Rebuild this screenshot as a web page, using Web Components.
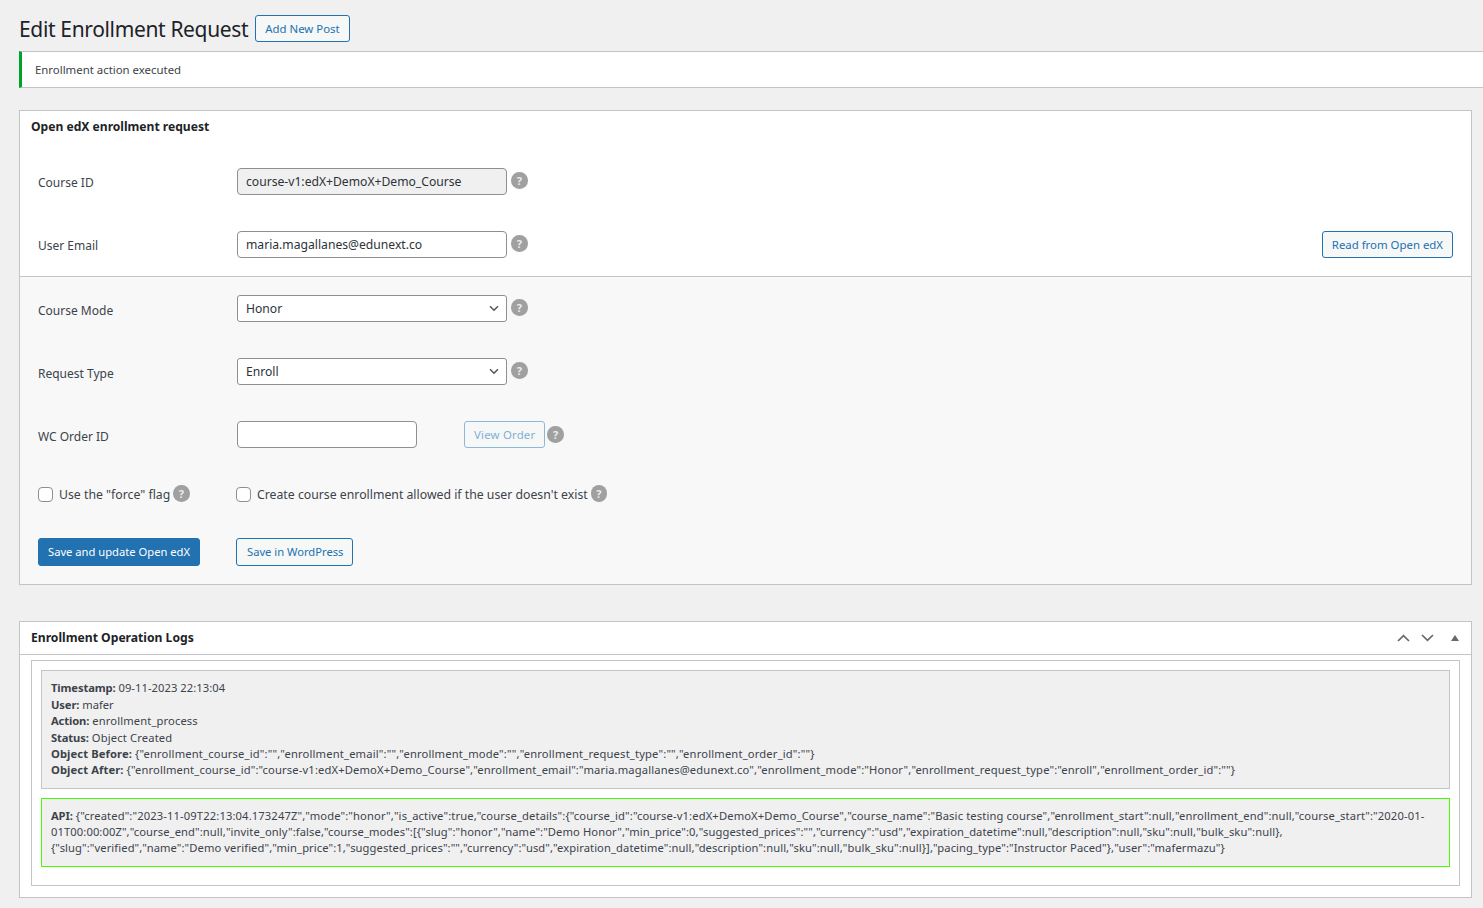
<!DOCTYPE html>
<html lang="en">
<head>
<meta charset="utf-8">
<title>Edit Enrollment Request</title>
<style>
html, body { margin: 0; background: #f0f0f1; }
body {
    font-family: "Noto Sans", "Liberation Sans", sans-serif;
    font-size: 12.4px;
    color: #3c434a;
}
log-entry b { letter-spacing: -.12px; }
log-entry b.wide { letter-spacing: .1px; }
</style>
</head>
<body>

<admin-page>
    <page-title slot="title" label="Edit Enrollment Request" action="Add New Post"></page-title>
    <admin-notice slot="notice">Enrollment action executed</admin-notice>

    <enroll-form></enroll-form>

    <log-box title-text="Enrollment Operation Logs">
        <log-entry>
            <div style="letter-spacing:.05px"><b>Timestamp:</b> 09-11-2023 22:13:04</div>
            <div><b>User:</b> mafer</div>
            <div style="letter-spacing:.12px"><b>Action:</b> enrollment_process</div>
            <div style="letter-spacing:.15px"><b>Status:</b> Object Created</div>
            <div style="letter-spacing:.17px"><b class="wide">Object Before:</b> {"enrollment_course_id":"","enrollment_email":"","enrollment_mode":"","enrollment_request_type":"","enrollment_order_id":""}</div>
            <div style="letter-spacing:.14px"><b class="wide">Object After:</b> {"enrollment_course_id":"course-v1:edX+DemoX+Demo_Course","enrollment_email":"maria.magallanes@edunext.co","enrollment_mode":"Honor","enrollment_request_type":"enroll","enrollment_order_id":""}</div>
        </log-entry>
        <log-entry kind="api">
            <div style="letter-spacing:.13px"><b>API:</b> {"created":"2023-11-09T22:13:04.173247Z","mode":"honor","is_active":true,"course_details":{"course_id":"course-v1:edX+DemoX+Demo_Course","course_name":"Basic testing course","enrollment_start":null,"enrollment_end":null,"course_start":"2020-01-</div>
            <div style="letter-spacing:.095px">01T00:00:00Z","course_end":null,"invite_only":false,"course_modes":[{"slug":"honor","name":"Demo Honor","min_price":0,"suggested_prices":"","currency":"usd","expiration_datetime":null,"description":null,"sku":null,"bulk_sku":null},</div>
            <div style="letter-spacing:.09px">{"slug":"verified","name":"Demo verified","min_price":1,"suggested_prices":"","currency":"usd","expiration_datetime":null,"description":null,"sku":null,"bulk_sku":null}],"pacing_type":"Instructor Paced"},"user":"mafermazu"}</div>
        </log-entry>
    </log-box>
</admin-page>

<script>
class AdminPage extends HTMLElement {
    constructor() {
        super();
        this.attachShadow({ mode: 'open' });
        this.shadowRoot.innerHTML = `
        <style>
            :host { display: block; padding: 15px 11px 0 19px; overflow: hidden; }
            .notice { display: block; margin: 9px -16px 22px 0; }
            .stack { display: flex; flex-direction: column; gap: 36px; }
        </style>
        <slot name="title"></slot>
        <div class="notice"><slot name="notice"></slot></div>
        <div class="stack"><slot></slot></div>
        `;
    }
}
customElements.define('admin-page', AdminPage);

class WpButton extends HTMLElement {
    constructor() {
        super();
        this.attachShadow({ mode: 'open' });
        this.shadowRoot.innerHTML = `
        <style>
            :host {
                display: inline-flex;
                align-items: center;
                justify-content: center;
                box-sizing: border-box;
                height: 27px;
                padding: 0 9px;
                border: 1px solid #2271b1;
                border-radius: 3px;
                background: #f6f7f7;
                color: #2271b1;
                font-size: 11.4px;
                white-space: nowrap;
            }
            :host([primary]) { background: #2271b1; color: #fff; }
            :host([disabled]) { border-color: #8fb8d8; color: #82b0d2; letter-spacing: .2px; }
        </style>
        <slot></slot>
        `;
    }
}
customElements.define('wp-button', WpButton);

class HelpTip extends HTMLElement {
    constructor() {
        super();
        this.attachShadow({ mode: 'open' });
        this.shadowRoot.innerHTML = `
        <style>
            :host {
                display: inline-flex;
                align-items: center;
                justify-content: center;
                flex: none;
                width: 16.5px;
                height: 16.5px;
                border-radius: 50%;
                background: #a0a0a0;
                color: #ececec;
                font-size: 11px;
                font-weight: 700;
                line-height: 1;
            }
        </style>
        ?
        `;
    }
}
customElements.define('help-tip', HelpTip);

class PageTitle extends HTMLElement {
    constructor() {
        super();
        this.attachShadow({ mode: 'open' });
        this.shadowRoot.innerHTML = `
        <style>
            :host { display: flex; align-items: center; gap: 7px; height: 27px; }
            h1 { margin: 2px 0 0; font-size: 21px; letter-spacing: -.35px; font-weight: 400; color: #1d2327; line-height: 27px; white-space: nowrap; }
        </style>
        <h1>${this.getAttribute('label')}</h1>
        <wp-button>${this.getAttribute('action')}</wp-button>
        `;
    }
}
customElements.define('page-title', PageTitle);

class AdminNotice extends HTMLElement {
    constructor() {
        super();
        this.attachShadow({ mode: 'open' });
        this.shadowRoot.innerHTML = `
        <style>
            :host {
                display: flex;
                align-items: center;
                box-sizing: border-box;
                height: 37px;
                padding-left: 13px;
                background: #fff;
                border: 1px solid #c3c4c7;
                border-left: 3px solid #00a32a;
                font-size: 11.4px;
                color: #3c434a;
            }
        </style>
        <slot></slot>
        `;
    }
}
customElements.define('admin-notice', AdminNotice);

class FormRow extends HTMLElement {
    constructor() {
        super();
        this.attachShadow({ mode: 'open' });
        this.shadowRoot.innerHTML = `
        <style>
            :host { display: grid; grid-template-columns: 199px 1fr; align-items: center; height: 27px; }
            .label { position: relative; top: var(--label-drop, 1px); font-size: 12px; color: #3c434a; }
            .field { display: flex; align-items: center; }
        </style>
        <div class="label"><slot name="label"></slot></div>
        <div class="field"><slot></slot></div>
        `;
    }
}
customElements.define('form-row', FormRow);

class TextField extends HTMLElement {
    constructor() {
        super();
        this.attachShadow({ mode: 'open' });
        const width = this.getAttribute('width') || '270';
        const value = this.getAttribute('value') || '';
        this.shadowRoot.innerHTML = `
        <style>
            :host { display: block; flex: none; width: ${width}px; height: 27px; }
            input {
                box-sizing: border-box;
                display: block;
                width: 100%;
                height: 100%;
                margin: 0;
                padding: 0 8px;
                border: 1px solid #8c8f94;
                border-radius: 4px;
                background: #fff;
                color: #2c3338;
                font: 12.15px "Noto Sans", "Liberation Sans", sans-serif;
                outline: 0;
            }
            input[readonly] { background: #f0f0f1; }
        </style>
        <input type="text" value="${value}" ${this.hasAttribute('readonly') ? 'readonly' : ''}>
        `;
    }
}
customElements.define('text-field', TextField);

class SelectField extends HTMLElement {
    constructor() {
        super();
        this.attachShadow({ mode: 'open' });
        this.shadowRoot.innerHTML = `
        <style>
            :host { display: block; position: relative; flex: none; width: 270px; height: 27px; }
            select {
                appearance: none;
                box-sizing: border-box;
                display: block;
                width: 100%;
                height: 100%;
                margin: 0;
                padding: 0 24px 0 8px;
                border: 1px solid #8c8f94;
                border-radius: 3px;
                background: #fff;
                color: #2c3338;
                font: 12.15px "Noto Sans", "Liberation Sans", sans-serif;
                outline: 0;
            }
            svg { position: absolute; right: 8px; top: 10px; pointer-events: none; }
        </style>
        <select><option>${this.getAttribute('value')}</option></select>
        <svg width="10" height="7" viewBox="0 0 10 7" fill="none" stroke="#50575e" stroke-width="1.5"><path d="M1 1.2 5 5.2 9 1.2"/></svg>
        `;
    }
}
customElements.define('select-field', SelectField);

class CheckField extends HTMLElement {
    constructor() {
        super();
        this.attachShadow({ mode: 'open' });
        this.shadowRoot.innerHTML = `
        <style>
            :host { display: inline-flex; align-items: center; font-size: 12.28px; color: #3c434a; white-space: nowrap; }
            input {
                appearance: none;
                box-sizing: border-box;
                width: 15px;
                height: 15px;
                margin: 0 6px 0 0;
                border: 1px solid #8c8f94;
                border-radius: 4px;
                background: #fff;
            }
            help-tip { margin-left: 3px; position: relative; top: -1px; }
        </style>
        <input type="checkbox"><span><slot></slot></span><help-tip></help-tip>
        `;
    }
}
customElements.define('check-field', CheckField);

class EnrollForm extends HTMLElement {
    constructor() {
        super();
        this.attachShadow({ mode: 'open' });
        this.shadowRoot.innerHTML = `
        <style>
            :host { display: block; background: #fff; border: 1px solid #c3c4c7; }
            h2 { margin: 0; padding: 8px 10px 0 11px; height: 49px; box-sizing: border-box; font-size: 12.1px; font-weight: 700; color: #1d2327; line-height: 16px; }
            .top { padding: 8px 18px 18px; border-bottom: 1px solid #c3c4c7; }
            .bottom { --label-drop: 2px; padding: 18px 18px 18px; background: #f8f8f8; display: flex; flex-direction: column; }
            form-row + form-row { margin-top: 36px; }
            .help { margin-left: 4px; position: relative; top: -1px; }
            .read { margin-left: auto; }
            .order { margin-left: 47px; }
            .order-help { margin-left: 2px; }
            .checks { display: grid; grid-template-columns: 198px 1fr; margin-top: 38px; height: 16px; align-items: center; }
            .actions { display: grid; grid-template-columns: 198px 1fr; margin-top: 36px; height: 28px; justify-items: start; }
            .actions wp-button { height: 28px; padding-bottom: 1px; font-size: 11.2px; }
            .actions .save { padding-left: 10px; }
        </style>
        <h2>Open edX enrollment request</h2>
        <div class="top">
            <form-row>
                <span slot="label">Course ID</span>
                <text-field readonly value="course-v1:edX+DemoX+Demo_Course"></text-field>
                <help-tip class="help"></help-tip>
            </form-row>
            <form-row>
                <span slot="label">User Email</span>
                <text-field value="maria.magallanes@edunext.co"></text-field>
                <help-tip class="help"></help-tip>
                <wp-button class="read">Read from Open edX</wp-button>
            </form-row>
        </div>
        <div class="bottom">
            <form-row>
                <span slot="label">Course Mode</span>
                <select-field value="Honor"></select-field>
                <help-tip class="help"></help-tip>
            </form-row>
            <form-row>
                <span slot="label">Request Type</span>
                <select-field value="Enroll"></select-field>
                <help-tip class="help"></help-tip>
            </form-row>
            <form-row>
                <span slot="label">WC Order ID</span>
                <text-field width="180"></text-field>
                <wp-button class="order" disabled>View Order</wp-button>
                <help-tip class="order-help"></help-tip>
            </form-row>
            <div class="checks">
                <check-field>Use the "force" flag</check-field>
                <check-field>Create course enrollment allowed if the user doesn't exist</check-field>
            </div>
            <div class="actions">
                <wp-button primary>Save and update Open edX</wp-button>
                <wp-button class="save">Save in WordPress</wp-button>
            </div>
        </div>
        `;
    }
}
customElements.define('enroll-form', EnrollForm);

class LogBox extends HTMLElement {
    constructor() {
        super();
        this.attachShadow({ mode: 'open' });
        this.shadowRoot.innerHTML = `
        <style>
            :host { display: block; background: #fff; border: 1px solid #c3c4c7; }
            header {
                display: flex;
                align-items: center;
                height: 32px;
                padding: 0 11px 0 11px;
                border-bottom: 1px solid #c3c4c7;
            }
            h2 { margin: 0 0 2px; flex: 1; font-size: 12.15px; font-weight: 700; color: #1d2327; }
            .controls { display: flex; align-items: center; }
            .controls svg { display: block; }
            .outer {
                margin: 5px 11px 11px;
                padding: 9px 9px 18px;
                border: 1px solid #c3c4c7;
                display: flex;
                flex-direction: column;
                gap: 9px;
            }
        </style>
        <header>
            <h2>${this.getAttribute('title-text')}</h2>
            <div class="controls">
                <svg width="13" height="8" viewBox="0 0 13 8" fill="none" stroke="#646970" stroke-width="1.7"><path d="M1 7 6.5 1.6 12 7"/></svg>
                <svg style="margin-left:11px" width="13" height="8" viewBox="0 0 13 8" fill="none" stroke="#646970" stroke-width="1.7"><path d="M1 1 6.5 6.4 12 1"/></svg>
                <svg style="margin-left:17px;margin-right:1px" width="8" height="6" viewBox="0 0 8 6" fill="#646970"><path d="M4 0 8 6H0Z"/></svg>
            </div>
        </header>
        <div class="outer"><slot></slot></div>
        `;
    }
}
customElements.define('log-box', LogBox);

class LogEntry extends HTMLElement {
    constructor() {
        super();
        this.attachShadow({ mode: 'open' });
        this.shadowRoot.innerHTML = `
        <style>
            :host {
                display: block;
                padding: 9.3px 9px 9.1px;
                background: #f0f0f1;
                border: 1px solid #c3c4c7;
                font-size: 11.2px;
                line-height: 16.4px;
                color: #3c434a;
                white-space: nowrap;
            }
            :host([kind="api"]) { border-color: #44ff00; line-height: 16.3px; padding: 9px 9px 9px; }
        </style>
        <slot></slot>
        `;
    }
}
customElements.define('log-entry', LogEntry);
</script>
</body>
</html>
